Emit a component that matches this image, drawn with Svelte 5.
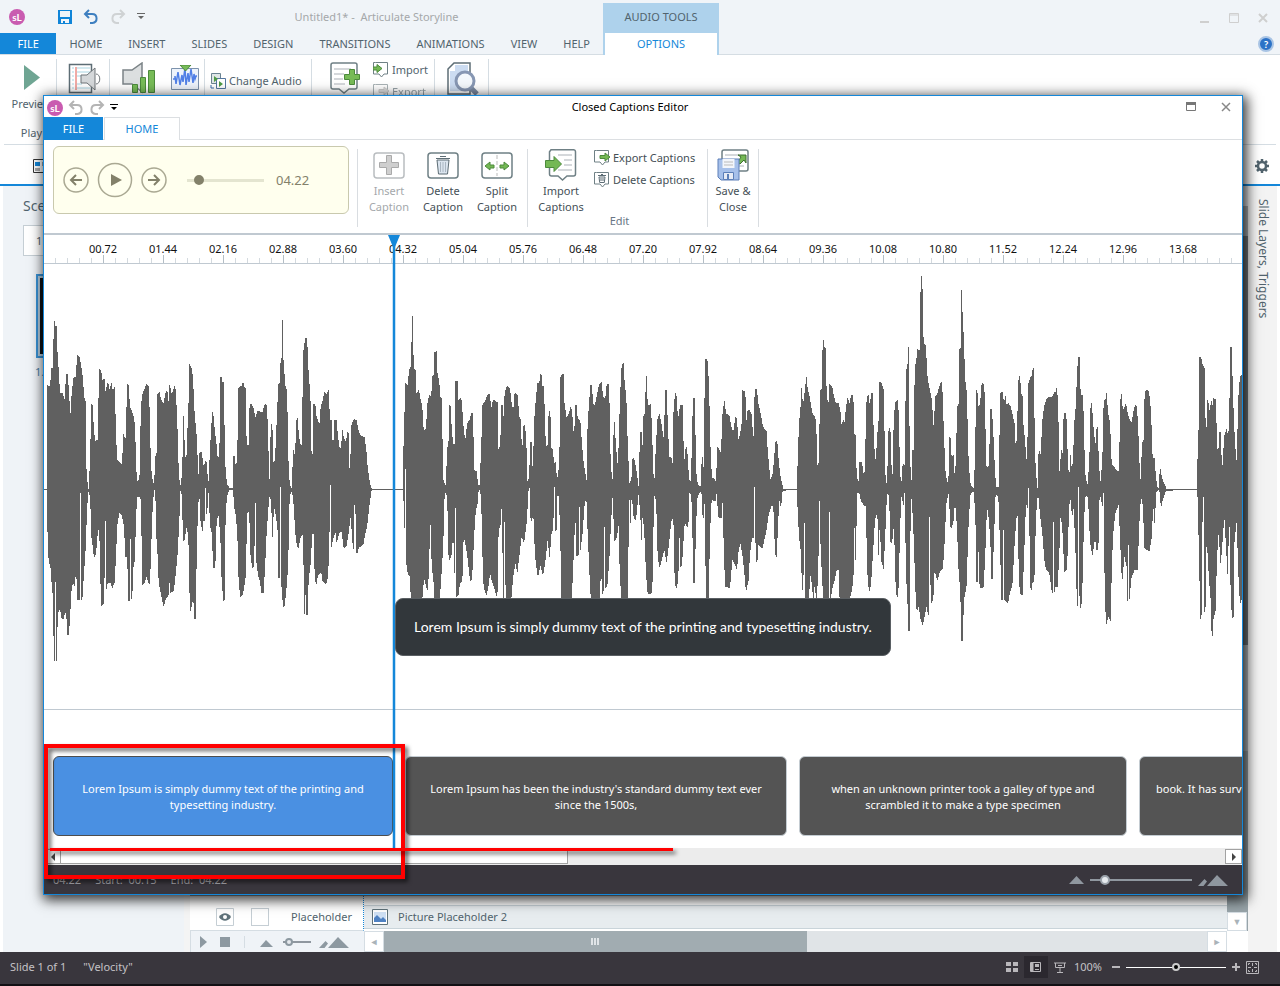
<script>
	const tabs = ['HOME', 'INSERT', 'SLIDES', 'DESIGN', 'TRANSITIONS', 'ANIMATIONS', 'VIEW', 'HELP'];

	const times = Array.from({ length: 19 }, (_, i) => ((i + 1) * 0.72).toFixed(2).padStart(5, '0'));

	const captions = [
		{ width: 340, text: 'Lorem Ipsum is simply dummy text of the printing and typesetting industry.', selected: true },
		{ width: 382, text: "Lorem Ipsum has been the industry's standard dummy text ever since the 1500s," },
		{ width: 328, text: 'when an unknown printer took a galley of type and scrambled it to make a type specimen' },
		{ width: 360, text: 'book. It has surv', cut: true }
	];

	// One outline per phrase, three units to a pixel, silence at level 688.
	const phrases = [
		{
			start: -4,
			upper:
				'12,687 20,687 22,375 30,380 34,325 38,325 41,222 43,180 46,197 50,197 53,290 57,340 60,400 68,398 74,420 78,345 82,335 86,380 91,468 95,400 100,355 107,350 112,283 118,290 123,312 128,350 133,412 137,425 138,600 141,655 146,690 150,600 154,432 158,435 160,480 165,543 173,540 175,435 178,325 184,335 188,365 193,350 196,395 202,370 207,372 209,390 214,366 218,390 224,380 228,510 231,600 240,606 246,615 248,570 251,512 256,550 259,455 262,370 266,375 270,440 276,455 283,475 286,530 290,650 294,670 297,648 300,640 302,455 306,405 312,390 319,370 326,378 330,480 332,590 335,640 340,675 344,640 347,580 351,580 352,402 358,395 364,420 370,432 376,400 382,390 385,430 389,367 394,398 398,395 405,372 408,402 412,490 416,625 420,680 424,665 428,580 428,467 432,470 434,560 436,592 441,580 443,480 446,420 448,312 454,320 459,350 463,447 468,505 471,540 474,630 477,655 478,580 485,575 490,615 494,610 499,598 502,640 506,665 509,590 512,530 517,453 521,470 524,508 530,555 533,592 538,592 541,352 545,352 547,365 551,365 554,520 557,640 562,675 570,685 579,685 580,588 585,590 587,620 592,600 594,385 600,380 606,378 609,362 613,380 617,385 620,555 627,555 628,445 632,430 640,440 646,474 653,450 660,455 668,455 674,432 680,435 684,500 687,645 690,670 692,492 697,490 700,608 705,600 710,485 715,372 719,370 722,298 726,290 726,180 729,180 731,337 735,345 737,387 741,387 744,520 746,630 750,675 757,688 758,570 762,570 765,592 768,508 771,453 775,505 780,550 785,557 787,440 790,273 796,233 801,233 804,290 807,370 811,372 813,570 818,582 820,432 826,432 829,465 835,485 839,489 842,440 848,420 854,395 860,402 866,388 870,480 875,480 877,540 882,540 883,480 890,480 893,520 898,560 903,565 907,508 912,535 918,545 922,515 926,520 928,630 931,600 934,495 942,478 950,480 955,510 962,527 974,532 979,570 983,620 987,650 990,672 996,687 1050,687',
			lower:
				'12,690 20,690 22,803 26,905 31,918 34,960 38,1005 41,1150 42,1202 45,1202 45,965 48,965 48,1202 51,1202 52,1110 55,1058 60,1046 64,1075 71,1078 76,1055 80,1080 82,1124 86,1124 88,1108 92,1040 95,985 99,968 104,978 107,948 110,960 112,1020 119,1020 120,698 123,698 123,1020 127,1020 130,970 134,910 138,850 141,745 146,690 151,720 153,825 157,850 160,880 165,896 169,870 174,810 178,810 180,935 184,1037 192,1030 194,930 195,784 198,784 199,990 203,968 212,970 217,984 224,968 228,890 232,795 238,757 246,768 252,800 256,890 262,890 264,1022 269,1022 270,836 273,836 274,1017 277,1017 279,930 284,905 288,790 291,710 298,710 302,718 306,890 306,977 313,970 320,950 325,970 330,974 333,880 337,765 342,690 346,690 348,812 353,890 356,965 362,1000 371,1040 377,1018 385,1010 389,965 391,998 400,995 405,965 409,925 413,880 418,785 421,690 426,708 429,845 434,840 440,800 445,830 449,1020 452,1058 456,1030 460,1020 463,1076 467,1076 470,900 474,740 478,705 481,778 487,818 491,780 495,785 495,685 498,685 499,765 503,740 506,690 510,800 516,820 519,926 526,922 530,780 536,768 541,830 545,965 550,1022 554,1020 556,810 559,735 563,700 568,690 579,690 583,745 588,768 593,850 596,970 601,1010 607,1008 612,985 617,950 622,760 628,755 630,875 636,920 639,930 643,905 645,730 648,730 648,898 654,945 660,965 664,998 671,998 675,925 680,820 685,745 690,695 695,765 697,842 702,740 708,770 713,815 715,955 719,955 720,680 723,680 723,960 727,1015 732,1050 736,1020 742,960 746,860 749,710 756,692 762,745 765,812 771,860 776,865 782,830 789,824 792,1000 792,1062 795,1062 795,1005 798,1005 798,1064 803,1064 806,960 812,910 817,822 821,822 824,945 828,980 834,945 844,937 848,965 858,975 864,950 868,870 870,675 873,675 874,862 879,840 886,815 890,850 898,820 905,815 911,865 919,860 926,820 932,770 937,845 941,870 943,735 946,735 949,878 953,878 957,862 970,855 975,825 982,795 988,740 995,690 1050,690'
		},
		{
			start: 346,
			upper:
				'0,687 40,687 41,460 45,455 46,370 50,372 54,378 56,340 60,320 63,320 65,222 66,168 69,168 69,262 73,325 77,330 79,400 87,388 91,415 97,440 101,510 108,508 112,430 118,405 124,410 126,350 131,345 132,278 140,273 142,337 148,368 152,415 155,415 158,560 160,660 167,675 172,565 176,540 178,435 182,437 185,500 189,550 194,553 196,362 203,362 205,420 214,412 217,450 222,520 227,535 231,490 239,480 243,460 249,460 252,600 254,640 259,628 262,655 268,687 272,600 275,520 277,435 286,422 291,405 299,402 304,445 309,418 318,425 323,425 326,590 332,520 334,435 338,435 340,480 344,400 351,376 360,385 366,440 371,440 374,396 383,405 388,470 393,480 396,590 400,498 405,495 409,540 412,665 417,655 421,547 425,547 428,630 431,545 434,455 437,425 442,368 448,370 451,340 455,345 457,378 461,378 464,440 467,545 472,570 476,455 481,452 484,565 489,570 492,610 497,605 500,645 505,655 507,560 510,560 511,352 516,340 521,342 523,425 530,475 536,462 543,437 547,465 552,535 556,435 560,435 563,475 571,482 576,550 580,600 586,640 591,670 593,460 597,450 600,375 606,375 609,430 615,435 622,400 627,375 635,365 639,410 646,415 650,373 656,373 659,440 662,605 666,655 669,660 671,487 675,487 677,550 684,625 687,505 691,390 695,315 701,308 704,370 709,410 712,515 715,590 718,670 724,660 728,588 734,600 740,635 746,680 750,515 755,515 757,575 760,470 766,455 767,347 770,350 772,415 776,437 782,430 786,500 790,640 794,655 797,570 802,480 808,460 814,490 822,540 825,390 830,390 833,480 838,592 844,592 848,610 851,430 857,398 860,410 864,480 870,435 878,435 881,560 884,605 887,560 892,560 893,600 898,660 903,665 906,527 909,412 914,415 917,545 920,660 926,675 933,680 935,592 939,592 940,660 943,440 946,298 952,295 955,335 958,415 962,580 966,655 972,655 978,665 982,560 987,565 993,580 997,465 1003,420 1008,460 1018,465 1024,500 1030,515 1036,470 1041,475 1045,540 1050,525 1055,490 1057,390 1066,395 1069,485 1073,450 1079,450 1086,467 1090,555 1093,415 1097,385 1101,388 1105,430 1112,460 1117,490 1122,505 1130,512 1133,570 1138,625 1142,660 1148,640 1152,600 1156,545 1162,543 1166,600 1170,640 1175,665 1180,687 1222,687',
			lower:
				'0,690 40,690 42,803 45,803 45,628 48,628 49,912 54,945 60,950 62,1008 66,1030 96,1030 102,955 107,975 112,995 117,940 120,795 123,795 125,925 130,955 134,1030 149,1030 152,980 156,920 160,850 163,720 168,690 172,730 176,905 185,885 190,815 192,940 195,940 195,745 198,745 199,1010 205,1008 210,970 217,965 221,830 226,850 234,905 240,963 246,960 250,880 254,800 258,745 262,740 266,690 271,690 275,770 279,960 283,990 290,1005 296,975 300,940 306,965 313,985 320,1010 324,990 326,785 328,805 331,805 334,748 337,748 338,1000 341,1015 342,785 345,785 347,1030 363,1030 369,955 376,910 382,940 388,890 395,830 402,850 410,790 416,685 419,685 422,790 430,765 435,890 444,955 451,915 459,950 466,905 473,840 479,895 485,815 490,810 492,680 495,680 495,815 500,810 503,690 507,720 511,840 514,1030 545,1030 551,890 556,765 559,888 566,886 568,740 570,740 571,875 578,820 583,740 589,710 593,820 597,910 601,1000 608,1030 628,1030 633,935 638,1010 642,985 643,800 646,800 646,985 652,980 658,900 663,790 668,705 673,845 682,830 685,775 688,900 694,1030 713,1030 716,830 719,700 720,790 723,790 725,700 731,775 738,782 746,700 751,770 755,850 758,760 763,820 768,940 773,1002 787,1000 790,820 794,695 799,740 803,890 809,925 815,900 823,870 830,910 837,850 844,785 850,770 854,960 858,990 865,960 868,820 872,935 877,900 884,790 895,805 898,700 904,705 908,850 910,970 914,970 917,850 921,720 926,705 934,690 938,775 941,775 943,690 945,850 949,1030 956,1030 960,820 965,720 976,725 980,700 985,772 995,775 998,720 1002,900 1006,980 1020,985 1027,900 1033,910 1041,930 1046,870 1051,850 1058,890 1063,940 1068,997 1076,960 1080,880 1086,835 1091,835 1092,685 1095,680 1097,900 1102,910 1105,855 1117,865 1128,820 1136,765 1145,735 1150,740 1154,850 1157,892 1160,892 1164,800 1168,720 1173,745 1178,692 1222,690'
		},
		{
			start: 746,
			upper:
				'20,687 24,575 27,490 32,435 34,380 39,432 43,405 49,347 53,385 58,405 64,440 68,463 76,470 80,530 84,665 87,555 91,390 96,385 98,238 101,240 103,262 107,265 110,400 115,440 118,370 127,380 132,410 138,430 146,430 151,450 154,492 160,480 164,487 168,440 173,412 178,430 184,405 190,405 193,520 197,525 200,640 205,675 208,605 216,605 220,640 225,635 227,510 230,410 236,405 239,435 244,400 248,400 252,550 257,603 263,510 266,480 268,365 275,368 281,390 283,485 286,640 291,680 295,515 301,495 304,610 308,645 311,487 315,428 324,418 327,480 330,640 334,670 338,612 344,615 347,390 350,315 354,312 354,262 357,262 357,390 360,600 365,665 367,570 372,568 374,322 379,300 382,268 389,270 391,98 393,90 393,48 396,48 398,98 400,225 403,253 407,255 410,300 413,355 418,380 425,415 431,500 436,410 442,400 448,380 454,362 458,400 460,470 463,550 467,645 475,675 478,532 482,535 485,592 491,585 494,650 498,600 501,440 506,430 508,268 513,262 513,90 516,90 517,148 520,200 524,310 527,375 531,400 534,550 537,625 542,675 552,685 556,540 558,390 562,390 565,440 570,435 575,368 581,372 585,410 588,600 590,625 597,615 601,447 606,447 611,540 614,610 618,680 627,680 629,480 631,400 638,395 642,430 646,402 650,435 656,430 662,440 668,465 674,490 678,585 682,470 686,347 690,350 694,400 698,410 701,510 706,540 708,617 712,565 715,372 720,353 726,345 728,325 731,325 734,500 737,630 743,687 746,565 752,585 757,480 762,440 768,420 776,412 787,410 792,398 798,396 801,373 805,460 809,655 813,565 818,580 821,460 829,460 833,580 837,660 842,578 846,640 850,570 853,485 858,430 861,335 865,290 869,292 872,405 878,405 881,460 884,590 887,655 893,675 898,600 902,425 906,430 909,485 916,555 920,500 924,500 926,595 931,670 937,600 941,425 947,415 950,395 954,460 960,485 965,610 972,620 980,630 987,635 990,455 993,380 997,435 1001,450 1008,428 1014,465 1024,490 1031,450 1035,435 1040,437 1044,485 1048,600 1052,665 1056,550 1061,540 1064,395 1070,390 1077,392 1081,430 1084,480 1088,595 1094,595 1098,655 1103,685 1107,685 1109,628 1113,628 1115,650 1120,665 1130,687 1221,687 1223,570 1226,500 1228,290 1233,290 1238,315 1244,325 1247,500 1250,500 1251,418 1255,425 1259,455 1264,418 1267,440 1270,415 1278,418 1281,560 1285,575 1288,515 1292,515 1293,570 1298,620 1302,530 1310,505 1315,530 1319,400 1321,262 1325,262 1330,430 1335,550 1340,605 1343,490 1346,390 1350,350 1358,340',
			lower:
				'20,690 27,830 32,870 36,980 40,1005 42,790 45,790 46,1030 56,1030 61,945 66,975 70,1030 74,975 80,1030 85,930 88,700 92,870 97,970 101,1030 117,1030 118,755 121,755 121,1030 127,985 134,960 140,930 146,930 149,1025 180,1015 187,985 191,940 194,780 195,900 198,900 199,820 202,700 208,700 212,720 220,735 228,740 231,925 237,998 243,975 249,880 255,780 262,755 265,885 268,885 269,750 273,900 281,928 286,820 291,700 297,705 302,860 308,835 312,790 316,960 321,1025 326,980 331,785 335,700 339,735 342,735 344,690 348,940 353,1040 355,1112 359,1112 361,830 365,705 371,830 376,985 380,1055 386,1040 392,1080 398,1097 404,1070 410,1038 414,1065 417,1065 417,770 420,770 422,1037 430,1015 434,930 442,963 450,935 459,925 464,845 469,730 476,700 482,810 490,790 495,725 501,800 505,920 511,1000 514,1142 518,1142 522,1020 530,975 535,810 541,705 550,692 556,755 559,965 563,965 564,825 569,985 581,982 586,880 591,740 597,780 602,870 604,957 608,957 611,860 617,700 625,712 630,850 634,1020 638,1020 639,810 642,810 643,1018 654,1032 660,995 667,980 675,830 680,770 683,768 687,970 692,1005 698,1005 703,870 708,730 713,745 715,685 717,685 720,965 723,1000 728,965 733,968 738,770 744,695 750,765 758,830 763,900 768,930 778,940 786,1000 789,1000 789,785 792,785 793,1000 797,980 803,980 808,880 812,760 818,825 823,938 831,930 836,790 840,700 846,772 851,745 856,860 861,1038 864,1038 864,680 867,680 868,1000 873,1063 878,960 882,780 887,705 894,712 900,845 907,890 915,835 920,872 925,870 929,700 938,740 941,690 944,985 948,1097 955,1070 962,1085 966,900 970,820 976,760 986,735 992,880 996,975 1003,890 1010,920 1011,1022 1014,1022 1014,855 1017,855 1018,1022 1024,955 1034,930 1043,930 1048,790 1053,710 1059,740 1063,865 1078,875 1085,835 1090,730 1092,790 1095,790 1098,700 1104,690 1108,692 1113,745 1118,720 1128,692 1222,690 1226,840 1231,1078 1236,1060 1238,710 1241,710 1243,1058 1247,1040 1250,830 1257,960 1262,1020 1265,1128 1268,1128 1270,1080 1277,1050 1281,890 1286,820 1292,917 1298,840 1303,770 1308,860 1313,950 1318,770 1322,1000 1326,1077 1331,1070 1333,850 1340,785 1345,940 1350,1035 1358,1010'
		}
	];

	function outline(phrase) {
		return phrase.upper + ' ' + phrase.lower.split(' ').reverse().join(' ');
	}
</script>

{#snippet logo()}
	<svg class="logo" width="16" height="16" viewBox="0 0 16 16">
		<circle cx="8" cy="8" r="8" fill="#c95bb0" />
		<text x="8" y="12" text-anchor="middle">sL</text>
	</svg>
{/snippet}

{#snippet undo(color)}
	<svg width="16" height="16" viewBox="0 0 16 16" fill="none" stroke={color} stroke-width="2">
		<path d="M6 1 2 5l4 4M2.5 5H9c6 0 6 8.500.500 9H7" />
	</svg>
{/snippet}

{#snippet redo(color)}
	<svg width="16" height="16" viewBox="0 0 16 16" fill="none" stroke={color} stroke-width="2">
		<path d="m10 1 4 4-4 4M13.5 5H7C1 5 1 13.500 6.500 14H9" />
	</svg>
{/snippet}

{#snippet caret(color)}
	<svg width="8" height="7" viewBox="0 0 8 7" fill={color}><path d="M0 0h8v1H0zM1 3h6L4 6z" /></svg>
{/snippet}

{#snippet note(w, h, arrow)}
	<svg width={w} height={h} viewBox="0 0 16 16" fill="none">
		<path d="M2.5.5h12v11.500h-3.500l-2.500 3-2.500-3H.5V.5z" fill="#fff" stroke="#6f8085" />
		{#if arrow === 'in'}
			<path d="M0 5h4V2.500L9 6.500 4 10.500V8H0z" fill="#74b854" stroke="#4c8a3c" />
		{:else if arrow === 'out'}
			<path d="M6 5.500h5V3l5 4-5 4V8.500H6z" fill="#74b854" stroke="#4c8a3c" />
		{:else if arrow === 'off'}
			<path d="M6 5.500h5V3l5 4-5 4V8.500H6z" fill="#ccc" stroke="#aaa" />
		{:else}
			<path d="M4 3.500h8M7 2.500h2M5 5h6l-.7 5.500H5.700zM7 6v3M9 6v3" stroke="#5d6d75" />
		{/if}
	</svg>
{/snippet}

{#snippet peaks(color)}
	<svg width="30" height="12" viewBox="0 0 30 12" fill={color}>
		<path d="M0 12 6.500 5l2.500 2.500L5.500 12zM9 12 19 1l11 11z" />
	</svg>
{/snippet}

{#snippet peak(color)}
	<svg width="15" height="8" viewBox="0 0 15 8" fill={color}><path d="m0 8 7.500-8L15 8z" /></svg>
{/snippet}

<div class="app">
	<header class="titlebar">
		<div class="quick">
			<span class="app-logo">{@render logo()}</span>
			<button aria-label="Save">
				<svg width="14" height="14" viewBox="0 0 14 14"><path fill="#0f84d8" d="M0 0h14v14H0z" /><path fill="#f0f4f8" d="M2 1h10v6H2zM3 9h8v4H3z" /><path fill="#0f84d8" d="M5 11h2v2H5z" /></svg>
			</button>
			<button aria-label="Undo">{@render undo('#3e7fc0')}</button>
			<button aria-label="Redo">{@render redo('#cfd2d4')}</button>
			<button aria-label="Customize">{@render caret('#666')}</button>
		</div>
		<div class="doc-title">Untitled1* - &nbsp;Articulate Storyline</div>
		<div class="context-title">AUDIO TOOLS</div>
		<div class="win-buttons">
			<button aria-label="Minimize"><svg width="10" height="10"><path fill="#cfcfcf" d="M0 8h9v2H0z" /></svg></button>
			<button aria-label="Maximize"><svg width="10" height="10"><path d="M.5.5h9v9h-9zM0 2h10" fill="none" stroke="#cfcfcf" /></svg></button>
			<button aria-label="Close"><svg width="10" height="10"><path d="m1 1 8 8m0-8L1 9" stroke="#cfcfcf" stroke-width="2" /></svg></button>
		</div>
	</header>

	<nav class="tabs">
		<div class="tab-list">
			<button class="file">FILE</button>
			{#each tabs as tab}
				<button>{tab}</button>
			{/each}
		</div>
		<div class="context-tab"><button>OPTIONS</button></div>
		<button class="help" aria-label="Help">
			<svg width="16" height="16" viewBox="0 0 16 16"><circle cx="8" cy="8" r="7" fill="#2c72c7" stroke="#a9c4e4" stroke-width="2" /><text x="8" y="12" text-anchor="middle">?</text></svg>
		</button>
	</nav>

	<section class="ribbon">
		<div class="group preview">
			<svg width="16" height="25"><path d="m0 0 16 12.500L0 25z" fill="#6fa593" /></svg>
			<span>Preview</span>
			<span class="caption">Play</span>
		</div>
		<div class="group g-script">
			<svg width="34" height="31" viewBox="0 0 34 31" fill="none">
				<path d="M1.500 1.500h22v28h-22z" fill="#fff" stroke="#5d6d75" stroke-width="1.500" />
				<path d="M4 5h2M4 9h2M4 13h2M4 17h2M4 21h2M4 25h2M9 5h13M9 9h13M9 13h6M9 21h5M9 25h13" stroke="#a9d5e2" />
				<path d="M8 4v23" stroke="#e2574c" />
				<path d="M13 12h6l8-7v22l-8-7h-6z" fill="#d5d8da" stroke="#6f7578" />
				<path d="M28 11c5 0 5 10 0 10" stroke="#6f7578" />
			</svg>
		</div>
		<div class="group g-volume">
			<svg width="34" height="32" viewBox="0 0 34 32">
				<path d="M1 8h9l10-7v29l-10-8H1z" fill="#dcdfe0" stroke="#7b8386" stroke-width="1.500" />
				<path d="M10.500 22.500h5v8h-5zM18.500 15.500h5v15h-5zM26.500 8.500h6v22h-6z" fill="#77bb57" stroke="#4c8a3c" />
			</svg>
			<svg width="28" height="26" viewBox="0 0 28 26">
				<path d="M.5 3.500h27v21H.5z" fill="#edf3fb" stroke="#7d93ad" />
				<path d="M2 14h2v-3l1 8 2-12 2 13 2-10 1 7 2-14 1 17 2-12 1 9 2-13 2 14 1-9 1 5 1-3h1" fill="none" stroke="#4f7fe6" stroke-width="1.500" />
				<path d="M9 0h11l-5.500 6z" fill="#77bb57" stroke="#4c8a3c" />
			</svg>
		</div>
		<div class="group g-change">
			<svg width="16" height="16" viewBox="0 0 16 16"><path d="M1.500.5h9v10h-9z" fill="#dfe6e6" stroke="#6a8391" /><path d="M6.500 5.500h9v10h-9z" fill="#fff" stroke="#5577a0" /><path d="m4 3 4 3-4 3zM9 8l4 3-4 3z" fill="#4f9a45" /><path d="M1 12v3h3" fill="none" stroke="#3e6fae" /></svg>
			<span>Change Audio</span>
		</div>
		<div class="group g-caption">
			<svg width="31" height="32" viewBox="0 0 31 32">
				<path d="M3 1h22a2 2 0 0 1 2 2v22a2 2 0 0 1-2 2h-6l-5 4-5-4H3a2 2 0 0 1-2-2V3a2 2 0 0 1 2-2z" fill="#fff" stroke="#6f8085" stroke-width="1.500" />
				<path d="M4 7h17M4 12h10M4 17h9M4 22h11" stroke="#c8cccf" stroke-width="1.500" />
				<path d="M19.500 7.500h5v5h5v5h-5v5h-5v-5h-5v-5h5z" fill="#77bb57" stroke="#4c8a3c" />
			</svg>
			<div class="mini">
				<span>{@render note(16, 16, 'in')} Import</span>
				<span class="dim">{@render note(16, 16, 'off')} Export</span>
			</div>
		</div>
		<div class="group g-find">
			<svg width="32" height="33" viewBox="0 0 32 33">
				<path d="M1 7 7 1h16v31H1z" fill="#fff" stroke="#5d6d75" stroke-width="1.500" /><path d="M3 9h5V3h13v26H3z" fill="#ccdcf1" />
				<path d="m24 26 6 6" stroke="#7c8ba3" stroke-width="5" /><circle cx="18" cy="19" r="9" fill="#f4f8fc" stroke="#8797b3" stroke-width="3" />
			</svg>
		</div>
	</section>

	<div class="view-bar">
		<svg width="16" height="14" viewBox="0 0 16 14"><path d="M.5.5h15v13H.5z" fill="#fff" stroke="#333" /><path fill="#1487d9" d="M2 3h5v4H2z" /><path fill="#aaa" d="M9 3h5v4H9zM2 9h5v3H2z" /></svg>
		<button aria-label="Panel options">
			<svg width="14" height="14" viewBox="0 0 14 14"><circle cx="7" cy="7" r="4" fill="none" stroke="#51636d" stroke-width="2.500" /><path d="M7 0v3M7 11v3M0 7h3M11 7h3M2 2l2 2M10 10l2 2M12 2l-2 2M4 10l-2 2" stroke="#51636d" stroke-width="2.500" /></svg>
		</button>
	</div>

	<main class="workspace">
		<aside class="scenes">
			<h2>Scenes</h2>
			<div class="scene-name">1</div>
			<div class="thumb"></div>
			<div class="thumb-label">1.1</div>
		</aside>
		<section class="center">
			<div class="canvas"></div>
			<div class="timeline">
				<div class="layer">
					<svg width="18" height="18" viewBox="0 0 18 18"><path d="M.5.5h17v17H.5z" fill="#fff" stroke="#c5ced4" /><path d="M3 9c3-5 9-5 12 0-3 5-9 5-12 0z" fill="#5f727a" /><circle cx="9" cy="9" r="2" fill="#fff" /></svg>
					<input type="checkbox" aria-label="Lock Placeholder" />
					<span>Placeholder</span>
				</div>
				<div class="clip">
					<svg width="16" height="16" viewBox="0 0 16 16"><path d="M.5.5h15v15H.5z" fill="#fff" stroke="#5f727a" /><path d="M2 3h12v10H2z" fill="#cfe0f4" /><path d="m2 9 3-3 4 4 2-2 3 3v2H2z" fill="#4f81c2" /></svg>
					Picture Placeholder 2
				</div>
				<div class="vscroll"><button aria-label="Scroll down">▼</button></div>
				<div class="transport">
					<svg width="7" height="12"><path d="m0 0 7 6-7 6z" fill="#8d99a1" /></svg>
					<span class="stop"></span>
					<span class="rule"></span>
					<svg class="small-peak" width="13" height="7"><path d="m0 7 6-7 7 7z" fill="#8d99a1" /></svg>
					<input class="range hollow" type="range" value="10" aria-label="Timeline zoom" />
					{@render peaks('#8d99a1')}
				</div>
				<div class="hscroll">
					<button aria-label="Scroll left">◄</button>
					<div class="hthumb"><i></i><i></i><i></i></div>
					<button class="end" aria-label="Scroll right">►</button>
				</div>
				<div class="corner"></div>
			</div>
		</section>
		<aside class="side"><span>Slide Layers, Triggers</span></aside>
	</main>

	<footer class="status">
		<span>Slide 1 of 1</span>
		<span>"Velocity"</span>
		<div class="status-tools">
			<button aria-label="Story view"><svg width="12" height="10"><path d="M0 0h5v4H0zM7 0h5v4H7zM0 6h5v4H0zM7 6h5v4H7z" fill="#b9b7bb" /></svg></button>
			<button class="on" aria-label="Slide view"><svg width="11" height="10"><path d="M.5.5h10v9H.5zM3 1v8" fill="none" stroke="#b9b7bb" /><path d="M1 1h2v8H1zM5 2h4v3H5zM5 7h4v1H5z" fill="#b9b7bb" /></svg></button>
			<button aria-label="Slide show"><svg width="12" height="11" fill="none" stroke="#b9b7bb"><path d="M0 1h12M1.500 1v4.500h9V1M4 3.500h4M6 6v4M3 10.500h6" /></svg></button>
			<span class="percent">100%</span>
			<svg width="8" height="2"><path d="M0 0h8v2H0z" fill="#b9b7bb" /></svg>
			<input class="range page-zoom" type="range" value="50" aria-label="Zoom" />
			<svg width="8" height="8"><path d="M3 0h2v3h3v2H5v3H3V5H0V3h3z" fill="#b9b7bb" /></svg>
			<button aria-label="Fit to window"><svg width="13" height="13" fill="none" stroke="#b9b7bb"><path d="M.5.5h12v12H.5zM6.500 2v3M6.500 8v3M2 6.500h3M8 6.500h3M2.500 4V2.500H4M9 2.500h1.500V4M2.500 9v1.500H4M10.500 9v1.500H9" /></svg></button>
		</div>
	</footer>

	<div class="dialog" role="dialog" aria-label="Closed Captions Editor">
		<div class="dlg-title">
			<div class="dlg-quick">
				{@render logo()}
				<button aria-label="Undo">{@render undo('#b4b4b4')}</button>
				<button aria-label="Redo">{@render redo('#b4b4b4')}</button>
				<button aria-label="Customize">{@render caret('#000')}</button>
			</div>
			<h1>Closed Captions Editor</h1>
			<div class="dlg-win">
				<button aria-label="Maximize"><svg width="10" height="9"><path d="M.5.5h9v8h-9z" fill="none" stroke="#777" /><path fill="#777" d="M0 0h10v3H0z" /></svg></button>
				<button aria-label="Close"><svg width="10" height="10"><path d="m1 1 8 8m0-8L1 9" stroke="#888" stroke-width="1.500" /></svg></button>
			</div>
		</div>

		<nav class="dlg-tabs">
			<button class="file">FILE</button>
			<button class="active">HOME</button>
		</nav>

		<div class="dlg-ribbon">
			<div class="player">
				<button aria-label="Previous"><svg width="26" height="26" fill="none" stroke="#83816a"><circle cx="13" cy="13" r="12" stroke="#aaa993" stroke-width="1.500" /><path d="M19 13H8m5-5-5 5 5 5" stroke-width="2" /></svg></button>
				<button aria-label="Play"><svg width="36" height="36"><circle cx="18" cy="18" r="16.500" fill="none" stroke="#aaa993" stroke-width="1.500" /><path d="m14 12 11 6-11 6z" fill="#83816a" /></svg></button>
				<button aria-label="Next"><svg width="26" height="26" fill="none" stroke="#83816a"><circle cx="13" cy="13" r="12" stroke="#aaa993" stroke-width="1.500" /><path d="M7 13h11m-5-5 5 5-5 5" stroke-width="2" /></svg></button>
				<input class="range seek" type="range" value="10" aria-label="Position" />
				<span>04.22</span>
			</div>
			<div class="tools three">
				<button class="tool" disabled>
					<svg width="32" height="32" viewBox="0 0 32 32"><rect x="1" y="4" width="30" height="25" rx="3" fill="#fff" stroke="#b9bdc0" stroke-width="1.500" /><path d="M13.500 6.500h5v7h7v5h-7v7h-5v-7h-7v-5h7z" fill="#cfcfcf" stroke="#aaa" /></svg>
					<span>Insert Caption</span>
				</button>
				<button class="tool">
					<svg width="32" height="32" viewBox="0 0 32 32"><rect x="1" y="4" width="30" height="25" rx="3" fill="#fff" stroke="#6f8085" stroke-width="1.500" /><path d="M9 9.500h14M13 7.500h6" stroke="#5d6d75" /><path d="m10 11 1.500 14h9L22 11z" fill="#dbe5ef" stroke="#5d6d75" /><path d="M13.500 13v10M16 13v10M18.500 13v10" stroke="#a9b6c2" /></svg>
					<span>Delete Caption</span>
				</button>
				<button class="tool">
					<svg width="32" height="32" viewBox="0 0 32 32"><rect x="1" y="4" width="30" height="25" rx="3" fill="#fff" stroke="#6f8085" stroke-width="1.500" /><path d="M16 6v21" stroke="#bbb" stroke-dasharray="4 2" /><path d="m4 17 5-4v3h4v3H9v2zM28 17l-5-4v3h-4v3h4v2z" fill="#74b854" stroke="#4c8a3c" /></svg>
					<span>Split Caption</span>
				</button>
			</div>
			<div class="tools edit">
				<button class="tool">
					<svg width="32" height="32" viewBox="0 0 32 32"><path d="M6 .8h22.500a2 2 0 0 1 2 2V25a2 2 0 0 1-2 2H22l-4.500 4-4.500-4H6.500a2 2 0 0 1-2-2V2.800z" fill="#fff" stroke="#6f8085" stroke-width="1.500" /><path d="M13 6h14M19 11h8M19 16h8M13 21h14" stroke="#c8cccf" stroke-width="1.500" /><path d="M.5 11.500H9V7.500L16.500 15 9 22.500v-4H.5z" fill="#74b854" stroke="#4c8a3c" /></svg>
					<span>Import Captions</span>
				</button>
				<div class="mini">
					<button>{@render note(16, 16, 'out')} Export Captions</button>
					<button>{@render note(16, 16, 'bin')} Delete Captions</button>
				</div>
				<span class="caption">Edit</span>
			</div>
			<div class="tools save">
				<button class="tool">
					<svg width="32" height="32" viewBox="0 0 32 32"><rect x="5" y="1" width="26" height="21" rx="2" fill="#fff" stroke="#6f8085" stroke-width="1.500" /><path d="M8 6h14M8 17h19" stroke="#c8cccf" stroke-width="1.500" /><path d="m20 14 4-6-3-2h8v8l-2-3-4 4z" fill="#74b854" stroke="#3d6e30" /><path d="M1 10h21v21H4l-3-3z" fill="#a6c0ea" stroke="#5c7fb8" /><path d="M5.500 10h12v9h-12z" fill="#f3f6fb" /><path d="M7 13h9M7 16h9" stroke="#bbb" /><path d="M6.500 23.500h10v7h-10z" fill="#e6ebf5" stroke="#5c7fb8" /><path d="M10 25h2v5h-2z" fill="#5c7fb8" /></svg>
					<span>Save &amp; Close</span>
				</button>
			</div>
		</div>

		<div class="editor">
			<div class="ruler">
				{#each times as time}
					<span>{time}</span>
				{/each}
			</div>
			<svg class="wave">
				{#each phrases as phrase}
					<polygon points={outline(phrase)} transform="translate({phrase.start} -4) scale({1 / 3})" />
				{/each}
			</svg>
			<div class="track">
				{#each captions as caption}
					<div class="card" class:selected={caption.selected} class:cut={caption.cut} style="width: {caption.width}px">
						{caption.text}
					</div>
				{/each}
			</div>
			<div class="playhead"><svg width="12" height="12"><path d="M0 0h12L7 12H5z" fill="#1487d9" /></svg></div>
			<p class="live-caption">Lorem Ipsum is simply dummy text of the printing and typesetting industry.</p>
		</div>

		<div class="dlg-scroll">
			<button aria-label="Scroll left"><svg width="4" height="8"><path d="M4 0v8L0 4z" fill="#444" /></svg></button>
			<div class="dlg-thumb"></div>
			<button class="end" aria-label="Scroll right"><svg width="4" height="8"><path d="M0 0v8l4-4z" fill="#444" /></svg></button>
		</div>

		<div class="dlg-status">
			<span>04.22</span>
			<span>Start: &nbsp;00.15</span>
			<span>End: &nbsp;04.22</span>
			<div class="dlg-zoom">
				{@render peak('#8f979f')}
				<input class="range wave-zoom" type="range" value="11" aria-label="Waveform zoom" />
				{@render peaks('#8f979f')}
			</div>
		</div>

		<div class="mark-box"></div>
		<div class="mark-line"></div>
	</div>
</div>

<style>
	:global(body) {
		margin: 0;
	}

	.app {
		position: relative;
		display: flex;
		flex-direction: column;
		min-height: 100vh;
		overflow: hidden;
		background: #fff;
		color: #51636d;
		font: 11px/16px 'Noto Sans', 'Open Sans', sans-serif;
	}

	.app * {
		box-sizing: border-box;
	}

	button {
		display: flex;
		align-items: center;
		justify-content: center;
		padding: 0;
		border: 0;
		background: none;
		color: inherit;
		font: inherit;
	}

	svg {
		display: block;
		flex: none;
	}

	.logo text,
	.help text {
		fill: #fff;
		font: bold 10px Lato, sans-serif;
	}

	h1,
	h2,
	p {
		margin: 0;
		font-weight: normal;
	}

	/* sliders */
	.range {
		appearance: none;
		height: 16px;
		margin: 0;
		background: linear-gradient(#8f979f, #8f979f) center / 100% 2px no-repeat;
	}
	.range::-webkit-slider-thumb {
		appearance: none;
		width: 10px;
		height: 10px;
		border: 2px solid #9aa2aa;
		border-radius: 50%;
		background: #e6eaee;
	}
	.hollow {
		width: 28px;
	}
	.hollow::-webkit-slider-thumb {
		width: 8px;
		height: 8px;
		border-color: #8d99a1;
	}
	.seek {
		width: 77px;
		background-image: linear-gradient(#e4e5d0, #e4e5d0);
		background-size: 100% 3px;
	}
	.seek::-webkit-slider-thumb {
		border-color: #83816a;
		background: #83816a;
	}
	.wave-zoom {
		width: 102px;
	}
	.page-zoom {
		width: 100px;
		background-image: linear-gradient(#fff, #fff);
		background-size: 100% 1px;
	}
	.page-zoom::-webkit-slider-thumb {
		width: 8px;
		height: 8px;
		border-color: #ccc;
		background: #000;
	}

	/* main window */
	.titlebar {
		display: flex;
		height: 33px;
		background: #f0f4f8;
	}
	.quick {
		display: flex;
		align-items: center;
		gap: 11px;
		width: 150px;
		padding-left: 9px;
	}
	.app-logo {
		margin-right: 22px;
	}
	.doc-title {
		width: 453px;
		padding-top: 9px;
		text-align: center;
		color: #a5a8aa;
	}
	.context-title {
		width: 116px;
		margin-top: 3px;
		padding-top: 6px;
		background: #aed2ec;
		text-align: center;
	}
	.win-buttons {
		display: flex;
		gap: 19px;
		margin-left: auto;
		padding: 3px 12px 0 0;
	}

	.tabs {
		display: flex;
		height: 22px;
		border-bottom: 1px solid #d5dde3;
		background: #f0f4f8;
	}
	.tab-list {
		display: flex;
		width: 603px;
	}
	.tab-list button {
		padding: 0 13px;
	}
	.tab-list .file,
	.dlg-tabs .file {
		width: 59px;
		padding: 0;
		background: #1487d9;
		color: #fff;
	}
	.context-tab {
		width: 116px;
		height: 22px;
		padding: 0 2px;
		background: #aed2ec;
	}
	.context-tab button {
		width: 100%;
		height: 22px;
		background: #fff;
		color: #1487d9;
	}
	.help {
		margin: 0 6px 0 auto;
	}

	.ribbon {
		display: flex;
		height: 90px;
		margin: 0 4px;
		border-bottom: 1px solid #d5dde3;
	}
	.group {
		display: flex;
		align-items: flex-start;
		margin-top: 4px;
		border-right: 1px solid #d5dde3;
	}
	.preview {
		flex-direction: column;
		align-items: center;
		width: 53px;
		padding: 6px 0 0 3px;
	}
	.preview span {
		margin-top: 6px;
	}
	.preview .caption {
		margin-top: 13px;
	}
	.g-script {
		width: 53px;
		padding: 4px 0 0 11px;
	}
	.g-volume {
		gap: 15px;
		width: 95px;
		padding: 3px 0 0 12px;
	}
	.g-volume svg + svg {
		margin-top: 3px;
	}
	.g-change {
		gap: 3px;
		width: 107px;
		padding: 14px 0 0 5px;
	}
	.g-caption {
		gap: 12px;
		width: 123px;
		padding: 3px 0 0 18px;
	}
	.g-find {
		width: 54px;
		padding: 3px 0 0 12px;
	}
	.mini {
		display: flex;
		flex-direction: column;
		gap: 6px;
	}
	.mini > * {
		display: flex;
		align-items: center;
		gap: 3px;
		white-space: nowrap;
	}
	.dim {
		opacity: 0.6;
	}

	.view-bar {
		display: flex;
		align-items: center;
		justify-content: space-between;
		height: 41px;
		padding: 6px 11px 4px 33px;
		border-bottom: 2px solid #1487d9;
	}

	.workspace {
		display: flex;
		flex: 1;
		border-left: 3px solid #fff;
	}
	.scenes {
		width: 187px;
		padding: 10px 0 0 20px;
		border-right: 6px solid #f4f4f4;
		background: #eff3f7;
	}
	.scenes h2 {
		font-size: 14px;
		line-height: 20px;
	}
	.scene-name {
		height: 31px;
		margin: 9px 8px 0 0;
		padding: 7px 12px;
		border: 1px solid #c5ced4;
		background: #fff;
	}
	.thumb {
		width: 112px;
		height: 84px;
		margin: 18px 0 0 13px;
		border: 2px solid #3a93d6;
		outline: 2px solid #b9cfdf;
		outline-offset: -4px;
		background: #0d1217;
	}
	.thumb-label {
		margin: 6px 0 0 12px;
		color: #4b7fa5;
	}

	.center {
		display: flex;
		flex: 1;
		flex-direction: column;
	}
	.canvas {
		flex: 1;
		background: linear-gradient(#e4e7ea 20px, #a9b0b5 20px 50px, #6f777d 50px 459px, #b5bcc0 459px 565px, #98a4a9 565px);
	}
	.timeline {
		display: grid;
		grid-template-columns: 174px 1fr 21px;
		grid-template-rows: 35px 21px;
		height: 56px;
		background: #fff;
	}
	.layer {
		display: flex;
		align-items: center;
		gap: 17px;
		padding: 8px 0 0 26px;
		border-right: 1px dotted #1487d9;
		border-bottom: 1px solid #d5dde3;
	}
	.layer input {
		appearance: none;
		width: 18px;
		height: 18px;
		margin: 0;
		border: 1px solid #c5ced4;
	}
	.layer span {
		margin-left: 5px;
	}
	.clip {
		display: flex;
		align-items: center;
		gap: 10px;
		height: 24px;
		margin-top: 9px;
		padding-left: 8px;
		border: 1px solid #c9d4da;
		border-width: 1px 0;
		background: #e7ecef;
	}
	.vscroll {
		display: flex;
		align-items: flex-end;
		background: #98a4a9;
	}
	.vscroll button {
		width: 20px;
		height: 19px;
		border: 1px solid #d5dde3;
		background: #fff;
		color: #aab3b9;
		font-size: 9px;
	}
	.transport {
		display: flex;
		align-items: center;
		padding-left: 9px;
		border-left: 1px solid #d5dde3;
		background: #eff3f7;
	}
	.stop {
		width: 10px;
		height: 10px;
		margin: 0 14px 0 13px;
		background: #8d99a1;
	}
	.rule {
		width: 1px;
		height: 12px;
		background: #d5dde3;
	}
	.small-peak {
		margin: 4px 10px 0 15px;
	}
	.hollow {
		margin-right: 8px;
	}
	.hscroll {
		display: flex;
		background: #e0e4e7;
	}
	.hscroll button {
		width: 20px;
		border: 1px solid #d5dde3;
		background: #fff;
		color: #aab3b9;
		font-size: 9px;
	}
	.hthumb {
		display: flex;
		align-items: center;
		justify-content: center;
		gap: 1px;
		width: 49%;
		background: #a1acb1;
	}
	.hthumb i {
		width: 2px;
		height: 7px;
		background: #e0e4e7;
	}
	.end {
		margin-left: auto;
	}
	.corner {
		background: #fff;
	}

	.side {
		width: 32px;
		padding-top: 13px;
		border-right: 3px solid #fff;
		background: #f3f3f3;
	}
	.side span {
		display: block;
		margin-left: 7px;
		font-size: 12px;
		writing-mode: vertical-rl;
	}

	.status {
		display: flex;
		align-items: center;
		gap: 17px;
		height: 34px;
		padding: 0 21px 2px 10px;
		border-bottom: 2px solid #121014;
		background: #39363d;
		color: #c4c2c6;
	}
	.status-tools {
		display: flex;
		align-items: center;
		gap: 6px;
		margin-left: auto;
	}
	.status-tools .on {
		width: 24px;
		height: 22px;
		background: #2b282f;
	}
	.percent {
		margin: 0 4px 0 2px;
	}

	/* captions editor */
	.dialog {
		position: absolute;
		inset: 95px 37px 91px 43px;
		display: flex;
		flex-direction: column;
		border: 1px solid #1487d9;
		background: #fff;
		box-shadow: 2px 3px 12px 2px rgba(0, 0, 0, 0.8);
		color: #454f56;
	}
	.dlg-title {
		display: grid;
		grid-template-columns: 1fr auto 1fr;
		height: 21px;
		padding: 0 11px 0 3px;
	}
	.dlg-quick {
		display: flex;
		align-items: center;
		gap: 5px;
		margin-top: 2px;
	}
	.dialog h1 {
		padding: 3px 18px 0 0;
		color: #000;
		font-size: 11px;
	}
	.dlg-win {
		display: flex;
		justify-content: flex-end;
		gap: 25px;
	}

	.dlg-tabs {
		display: flex;
		gap: 1px;
		height: 23px;
		border-bottom: 1px solid #dcdfe2;
	}
	.dlg-tabs .active {
		width: 76px;
		height: 23px;
		border: 1px solid #dcdfe2;
		border-bottom: 0;
		background: #fff;
		color: #1487d9;
	}
	.dlg-tabs .file {
		height: 23px;
	}

	.dlg-ribbon {
		display: flex;
		height: 95px;
		padding: 6px 0 0 9px;
		border-bottom: 2px solid #c0c9d1;
	}
	.player {
		display: flex;
		align-items: center;
		gap: 8px;
		width: 296px;
		height: 68px;
		padding-left: 9px;
		border: 1px solid #c9c9ae;
		border-radius: 6px;
		background: #ffffee;
		color: #83816a;
		font-size: 13px;
	}
	.seek {
		margin: 0 4px 0 12px;
	}
	.tools {
		display: flex;
		height: 78px;
		margin-top: 3px;
		border-right: 1px solid #d9dde1;
	}
	.three {
		gap: 2px;
		margin-left: 8px;
		padding: 0 4px 0 5px;
		border-left: 1px solid #d9dde1;
	}
	.tool {
		flex-direction: column;
		justify-content: flex-start;
		gap: 2px;
		width: 52px;
		height: 66px;
	}
	.tool:disabled {
		color: #a4a8ab;
	}
	.edit {
		display: grid;
		grid-template-columns: 60px 1fr;
		grid-template-rows: 64px 1fr;
		width: 180px;
		padding-left: 4px;
	}
	.edit .tool {
		width: 58px;
	}
	.edit .mini {
		align-items: flex-start;
		padding: 1px 0 0 2px;
	}
	.edit .caption {
		grid-column: 1 / 3;
		text-align: center;
		color: #697686;
	}
	.save .tool {
		width: 50px;
	}

	.editor {
		position: relative;
		display: flex;
		flex: 1;
		flex-direction: column;
		overflow: hidden;
	}
	.ruler {
		display: flex;
		height: 29px;
		padding: 6px 0 0 29px;
		border-bottom: 1px solid #c0c9d1;
		background:
			linear-gradient(to right, #b4bec6 1px, transparent 1px) 59px bottom / 60px 8px repeat-x,
			linear-gradient(to right, #d3d9de 1px, transparent 1px) 11px bottom / 12px 5px repeat-x;
		color: #111;
	}
	.ruler span {
		flex: none;
		width: 60px;
		text-align: center;
	}
	.wave {
		width: 100%;
		height: 445px;
		fill: #606060;
		shape-rendering: crispEdges;
	}
	.track {
		display: flex;
		flex: 1;
		align-items: flex-start;
		gap: 12px;
		padding: 46px 0 0 9px;
		border-top: 1px solid #c0c9d1;
	}
	.card {
		flex: none;
		height: 80px;
		padding: 24px 16px;
		border: 1px solid #c4ccd2;
		border-radius: 6px;
		background: #545454;
		color: #fff;
		text-align: center;
	}
	.selected {
		border-color: #4d4d4d;
		background: #4a90e2;
	}
	.cut {
		text-align: left;
	}
	.playhead {
		position: absolute;
		top: 0;
		bottom: 0;
		left: 349px;
		width: 2px;
		background: #1487d9;
		box-shadow: 0 0 0 1px rgba(20, 135, 217, 0.25);
	}
	.playhead svg {
		margin-left: -5px;
	}
	.live-caption {
		position: absolute;
		top: 363px;
		left: 351px;
		padding: 20px 18px;
		border: 1px solid #5a5f63;
		border-radius: 8px;
		background: #32373b;
		color: #fff;
		font: 14px/16px Lato, sans-serif;
	}

	.dlg-scroll {
		display: flex;
		height: 17px;
		padding-top: 1px;
		background: #ececec;
	}
	.dlg-scroll button {
		width: 17px;
		height: 15px;
		border: 1px solid #a2a2a2;
		background: #fff;
	}
	.dlg-thumb {
		width: 507px;
		height: 15px;
		border: 1px solid #a2a2a2;
		border-left: 0;
		background: #fff;
	}

	.dlg-status {
		display: flex;
		align-items: center;
		gap: 14px;
		height: 29px;
		padding: 1px 14px 0 9px;
		background: #39363d;
		color: #a9a7ac;
	}
	.dlg-zoom {
		display: flex;
		align-items: center;
		gap: 6px;
		margin-left: auto;
	}

	/* red highlight over the first caption */
	.mark-box {
		position: absolute;
		bottom: 15px;
		left: 0;
		width: 361px;
		height: 135px;
		border: 4px solid #f00;
		filter: drop-shadow(3px 3px 2px rgba(0, 0, 0, 0.6));
	}
	.mark-line {
		position: absolute;
		bottom: 43px;
		left: 6px;
		width: 623px;
		height: 3px;
		background: #f00;
		filter: drop-shadow(3px 3px 2px rgba(0, 0, 0, 0.6));
	}
</style>
